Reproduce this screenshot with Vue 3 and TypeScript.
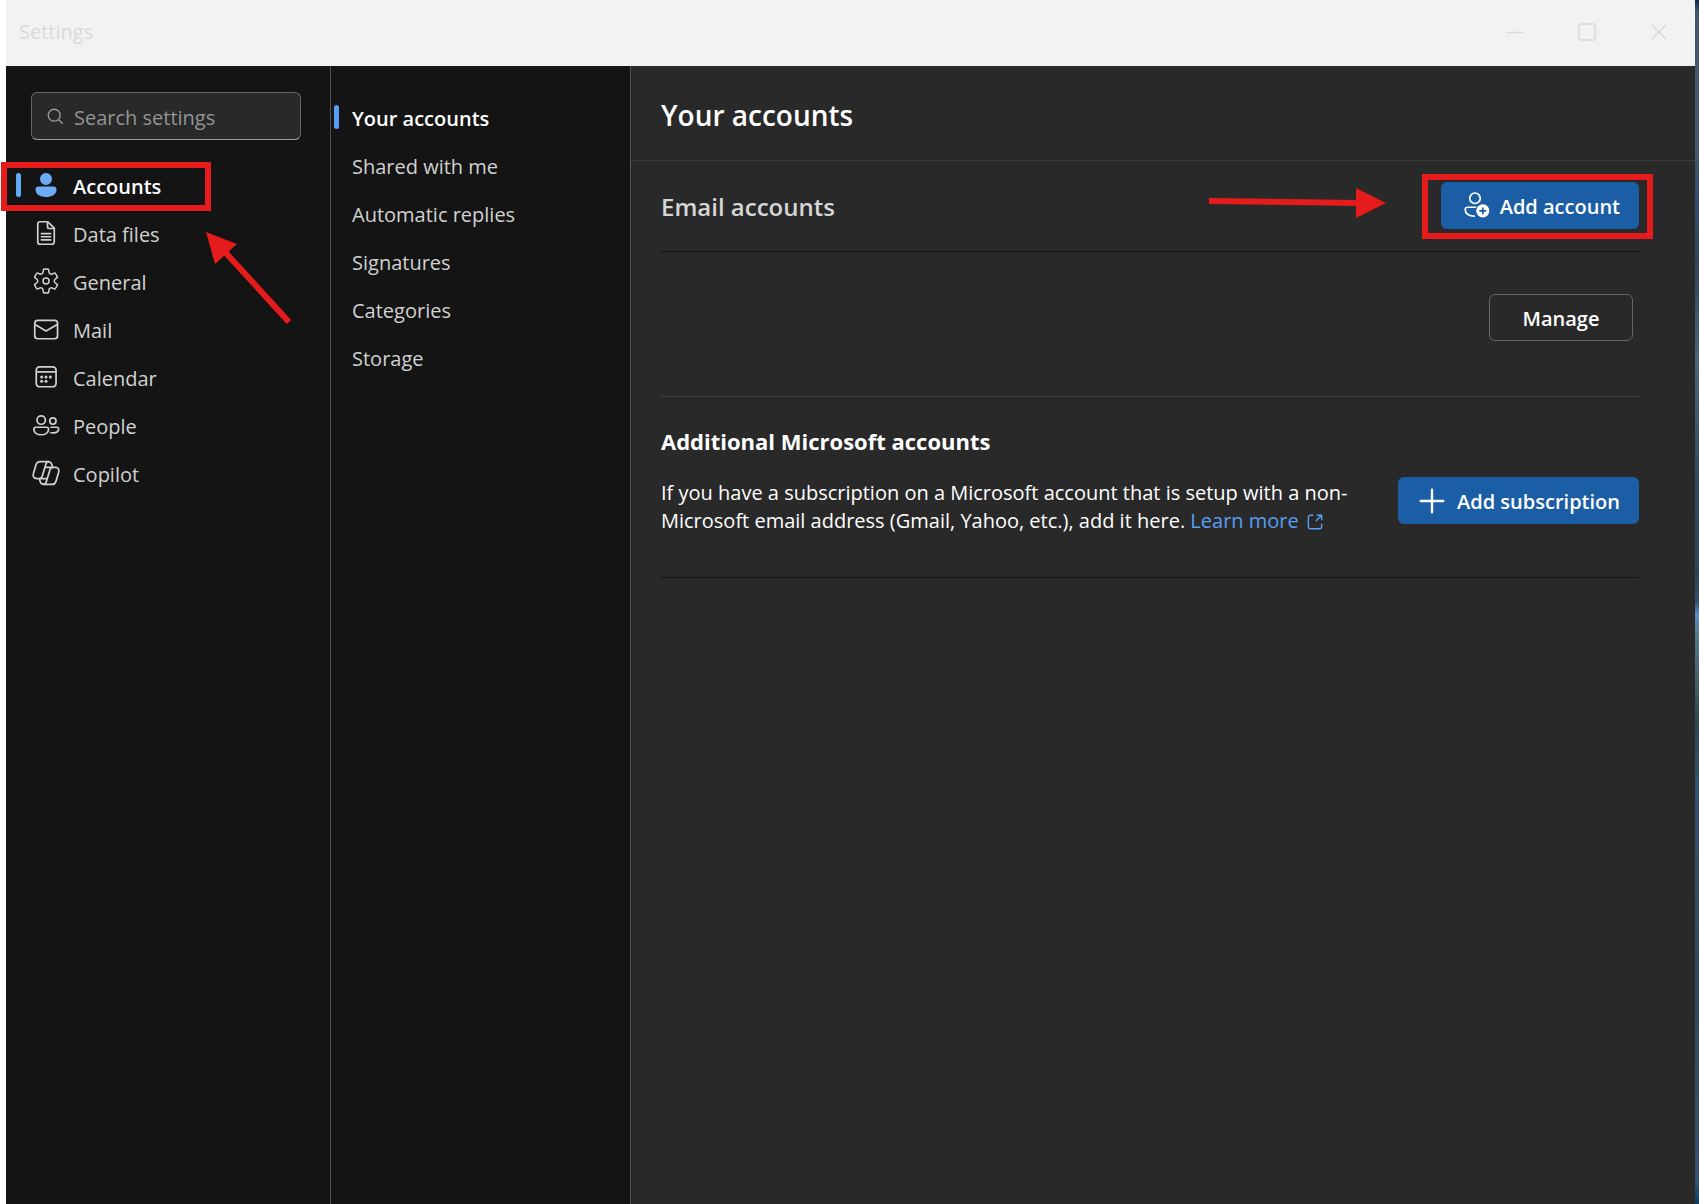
<script setup lang="ts">
import { ref } from 'vue'

interface NavItem {
  id: string
  label: string
}

const sections: NavItem[] = [
  { id: 'accounts', label: 'Accounts' },
  { id: 'files', label: 'Data files' },
  { id: 'general', label: 'General' },
  { id: 'mail', label: 'Mail' },
  { id: 'calendar', label: 'Calendar' },
  { id: 'people', label: 'People' },
  { id: 'copilot', label: 'Copilot' },
]

const pages: string[] = [
  'Your accounts',
  'Shared with me',
  'Automatic replies',
  'Signatures',
  'Categories',
  'Storage',
]

const activeSection = ref('accounts')
const activePage = ref('Your accounts')
const query = ref('')
</script>

<template>
  <div class="desktop">
    <div class="window">
      <header class="titlebar">
        <span class="caption">Settings</span>
        <div class="controls">
          <button type="button" aria-label="Minimize">
            <svg viewBox="0 0 20 20"><path d="M1.5 10.5h17" /></svg>
          </button>
          <button type="button" aria-label="Maximize">
            <svg viewBox="0 0 20 20"><rect x="2" y="2" width="16" height="16" rx="1.5" /></svg>
          </button>
          <button type="button" aria-label="Close">
            <svg viewBox="0 0 20 20"><path d="M3 3l14 14M17 3L3 17" /></svg>
          </button>
        </div>
      </header>

      <div class="body">
        <nav class="sections" aria-label="Settings sections">
          <label class="search">
            <svg viewBox="0 0 20 20" aria-hidden="true">
              <circle cx="8.5" cy="8.5" r="7" />
              <path d="M13.5 13.5l5 5" />
            </svg>
            <input v-model="query" type="text" placeholder="Search settings" aria-label="Search settings" />
          </label>

          <ul>
            <li v-for="item in sections" :key="item.id">
              <button
                type="button"
                class="section"
                :class="{ active: item.id === activeSection }"
                @click="activeSection = item.id"
              >
                <svg class="icon" viewBox="0 0 20 20" aria-hidden="true">
                  <path
                    v-if="item.id === 'accounts'"
                    class="solid"
                    d="M10 2a4 4 0 1 0 0 8 4 4 0 0 0 0-8zM5 11a2 2 0 0 0-2 2c0 1.7.83 2.97 2.13 3.8A9.14 9.14 0 0 0 10 18c1.85 0 3.58-.39 4.87-1.2A4.35 4.35 0 0 0 17 13a2 2 0 0 0-2-2H5z"
                  />
                  <template v-else-if="item.id === 'files'">
                    <path d="M6 2.5h5.2l4.3 4.3V16a1.5 1.5 0 0 1-1.5 1.5H6A1.5 1.5 0 0 1 4.5 16V4A1.5 1.5 0 0 1 6 2.5z" />
                    <path d="M11 2.8V6a1 1 0 0 0 1 1h3.2M6.5 10.4h7M6.5 12.5h7M6.5 14.6h7" />
                  </template>
                  <path
                    v-else-if="item.id === 'general'"
                    class="solid"
                    d="M1.91 7.38A8.5 8.5 0 0 1 3.7 4.3a.5.5 0 0 1 .54-.13l1.92.68a1 1 0 0 0 1.32-.76l.36-2a.5.5 0 0 1 .4-.4 8.53 8.53 0 0 1 3.55 0c.2.04.35.2.38.4l.37 2a1 1 0 0 0 1.32.76l1.92-.68a.5.5 0 0 1 .54.13 8.5 8.5 0 0 1 1.78 3.08c.06.2 0 .4-.15.54l-1.56 1.32a1 1 0 0 0 0 1.52l1.56 1.32a.5.5 0 0 1 .15.54 8.5 8.5 0 0 1-1.78 3.08.5.5 0 0 1-.54.13l-1.92-.68a1 1 0 0 0-1.32.76l-.37 2a.5.5 0 0 1-.38.4 8.53 8.53 0 0 1-3.56 0 .5.5 0 0 1-.39-.4l-.36-2a1 1 0 0 0-1.32-.76l-1.92.68a.5.5 0 0 1-.54-.13 8.5 8.5 0 0 1-1.78-3.08.5.5 0 0 1 .15-.54l1.56-1.32a1 1 0 0 0 0-1.52L2.06 7.92a.5.5 0 0 1-.15-.54zm1.06 0 1.3 1.1a2 2 0 0 1 0 3.04l-1.3 1.1c.3.79.72 1.51 1.25 2.16l1.6-.58a2 2 0 0 1 2.63 1.53l.3 1.67a7.56 7.56 0 0 0 2.5 0l.3-1.67a2 2 0 0 1 2.64-1.53l1.6.58a7.5 7.5 0 0 0 1.24-2.16l-1.3-1.1a2 2 0 0 1 0-3.04l1.3-1.1a7.5 7.5 0 0 0-1.25-2.16l-1.6.58a2 2 0 0 1-2.63-1.53l-.3-1.67a7.55 7.55 0 0 0-2.5 0l-.3 1.67A2 2 0 0 1 5.82 5.8l-1.6-.58a7.5 7.5 0 0 0-1.25 2.16zM7.5 10a2.5 2.5 0 1 1 5 0 2.5 2.5 0 0 1-5 0zM10 8.5a1.5 1.5 0 1 0 0 3 1.5 1.5 0 0 0 0-3z"
                  />
                  <template v-else-if="item.id === 'mail'">
                    <rect x="2.5" y="4.2" width="15.2" height="12.3" rx="2" />
                    <path d="M2.7 7l7.3 4.4L17.5 7" />
                  </template>
                  <template v-else-if="item.id === 'calendar'">
                    <rect x="3.5" y="3.3" width="13.2" height="13.2" rx="2.2" />
                    <path d="M3.5 6.6h13.2" />
                    <g class="dots">
                      <circle cx="7.1" cy="10" r="1" />
                      <circle cx="10" cy="10" r="1" />
                      <circle cx="12.9" cy="10" r="1" />
                      <circle cx="7.1" cy="12.9" r="1" />
                      <circle cx="10" cy="12.9" r="1" />
                    </g>
                  </template>
                  <template v-else-if="item.id === 'people'">
                    <circle cx="6.8" cy="6.7" r="2.8" />
                    <circle cx="14.6" cy="7.4" r="2.1" />
                    <path d="M3.2 11.5h7.2a1.3 1.3 0 0 1 1.3 1.3c0 2.4-2.2 3.7-4.9 3.7s-4.9-1.3-4.9-3.7a1.3 1.3 0 0 1 1.3-1.3z" />
                    <path d="M13 11.5h4.2a1.2 1.2 0 0 1 1.2 1.2c0 1.8-1.6 2.6-3.6 2.6-.8 0-1.4-.1-2-.3" />
                  </template>
                  <template v-else>
                    <path d="M6 2.4h5.500c1.500 0 2 .8 2.400 2l.5 1.900h1.800c2 0 2.800 1.600 2.200 3.300l-1.800 6c-.4 1.300-1.300 2-2.600 2H8.500c-1.500 0-2-.8-2.400-2l-.5-1.900H3.800c-2 0-2.800-1.600-2.200-3.300l1.800-6c.4-1.300 1.200-2 2.600-2z" />
                    <path d="M11.800 2.400c-1.200 0-1.600.8-1.900 1.800L7.500 12c-.4 1.200-.9 1.700-1.900 1.700M8.300 17.600c1.200 0 1.600-.8 1.900-1.800L12.600 8c.4-1.200.9-1.700 1.900-1.700M9.400 6.300h5M5.600 13.700h5" />
                  </template>
                </svg>
                <span>{{ item.label }}</span>
              </button>
              <template v-if="item.id === 'accounts'">
                <span class="mark mark-section"></span>
                <svg class="arrow arrow-section" viewBox="0 0 88 96" aria-hidden="true">
                  <path class="shaft" d="M20 21L84 91" />
                  <path class="head" d="M1 1l31 12L10 33z" />
                </svg>
              </template>
            </li>
          </ul>
        </nav>

        <nav class="pages" aria-label="Account pages">
          <ul>
            <li v-for="page in pages" :key="page">
              <button
                type="button"
                class="page"
                :class="{ active: page === activePage }"
                @click="activePage = page"
              >
                <span>{{ page }}</span>
              </button>
            </li>
          </ul>
        </nav>

        <main>
          <div class="heading">
            <h1>Your accounts</h1>
          </div>

          <div class="content">
            <section class="email">
              <h2>Email accounts</h2>
              <div class="callout">
                <button type="button" class="primary">
                  <svg class="icon" viewBox="0 0 20 20" aria-hidden="true">
                    <circle cx="10" cy="5.5" r="3.5" />
                    <path d="M10.8 11.5H5A1.5 1.5 0 0 0 3.5 13c0 2.8 2.7 4.4 6.5 4.5" />
                    <circle class="badge" cx="15.2" cy="13.9" r="4.4" />
                    <path class="cut" d="M15.2 11.6v4.6M12.9 13.9h4.6" />
                  </svg>
                  <span>Add account</span>
                </button>
                <span class="mark mark-add"></span>
                <svg class="arrow arrow-add" viewBox="0 0 178 32" aria-hidden="true">
                  <path class="shaft" d="M0 14l150 2" />
                  <path class="head" d="M147 1l30 15-30 15z" />
                </svg>
              </div>
            </section>

            <section class="account">
              <button type="button" class="outline"><span>Manage</span></button>
            </section>

            <section class="additional">
              <h2>Additional Microsoft accounts</h2>
              <div class="row">
                <p>
                  If you have a subscription on a Microsoft account that is setup with a non-Microsoft
                  email address (Gmail, Yahoo, etc.), add it here.
                  <a href="#learn-more">Learn more
                    <svg viewBox="0 0 18 18" aria-hidden="true">
                      <path d="M7 1.5H4A2.5 2.5 0 0 0 1.5 4v10A2.5 2.5 0 0 0 4 16.5h10a2.5 2.5 0 0 0 2.5-2.5v-3M11 1.5h5.5V7M16.2 1.8L10 8" />
                    </svg>
                  </a>
                </p>
                <button type="button" class="primary">
                  <svg class="icon plus" viewBox="0 0 20 20" aria-hidden="true">
                    <path d="M10 2.500v15M2.500 10h15" />
                  </svg>
                  <span>Add subscription</span>
                </button>
              </div>
            </section>
          </div>
        </main>
      </div>
    </div>
    <div class="wallpaper"></div>
  </div>
</template>

<style>
body {
  margin: 0;
  background: #ffffff;
}
</style>

<style scoped>
* {
  box-sizing: border-box;
}

.desktop {
  display: flex;
  min-height: 100vh;
  padding-left: 6px;
  font-family: 'Open Sans', 'Noto Sans', sans-serif;
  font-size: 20px;
  line-height: 28px;
  color: #ffffff;
}

.window {
  flex: 1;
  display: flex;
  flex-direction: column;
  min-width: 0;
}

.wallpaper {
  width: 4px;
  background: linear-gradient(
    #12284a 0,
    #44546a 1%,
    #46566c 12%,
    #35506a 16%,
    #33445c 22%,
    #4d6377 30%,
    #33495c 40%,
    #2f4353 48%,
    #34506a 50%,
    #5d8cc0 51%,
    #56777f 53%,
    #2e4750 60%,
    #34526b 65%,
    #34485c 82%,
    #35536b 98%,
    #0d3c66 100%
  );
}

button {
  margin: 0;
  padding: 0;
  border: 0;
  background: none;
  color: inherit;
  font: inherit;
  cursor: pointer;
}

ul {
  margin: 0;
  padding: 0;
  list-style: none;
}

svg {
  flex: none;
  fill: none;
  stroke: currentColor;
  overflow: visible;
}

.icon {
  width: 30px;
  height: 30px;
  stroke-width: 1.15;
}

.solid,
.dots {
  fill: currentColor;
  stroke: none;
}

.titlebar {
  display: flex;
  height: 66px;
  justify-content: space-between;
  align-items: center;
  padding: 0 0 2px 13px;
  background: #f2f2f2;
  color: #d9d9d9;
}

.controls {
  display: flex;
  height: 100%;
}

.controls button {
  display: flex;
  width: 72px;
  justify-content: center;
  align-items: center;
}

.controls svg {
  width: 20px;
  height: 20px;
  stroke-width: 1.5;
}

.body {
  flex: 1;
  display: flex;
}

.sections {
  flex: none;
  width: 325px;
  border-right: 1px solid #525252;
  background: #141414;
}

.search {
  display: flex;
  align-items: center;
  gap: 10px;
  height: 48px;
  margin: 26px 29px 21px 25px;
  padding: 0 15px;
  border: 1px solid #666666;
  border-bottom-color: #9e9e9e;
  border-radius: 6px;
  background: #292929;
  color: #999999;
}

.search svg {
  width: 17px;
  height: 17px;
  stroke-width: 1.6;
}

.search input {
  flex: 1;
  min-width: 0;
  padding: 3px 0 0;
  border: 0;
  outline: 0;
  background: none;
  color: #ffffff;
  font: inherit;
}

.search input::placeholder {
  color: #949494;
  opacity: 1;
}

.sections li {
  position: relative;
}

.section,
.page {
  position: relative;
  display: flex;
  align-items: center;
  width: 100%;
  height: 48px;
  color: #d1d1d1;
  text-align: left;
}

.section span,
.page span,
.outline span,
.primary span {
  padding-top: 3px;
}

.section {
  gap: 12px;
  padding-left: 25px;
}

.active {
  color: #ffffff;
  font-weight: 600;
}

.active::before {
  content: '';
  position: absolute;
  top: 12px;
  left: 10px;
  width: 5px;
  height: 24px;
  border-radius: 3px;
  background: #62abf5;
}

.section.active .icon {
  color: #6cabf5;
}

.pages {
  flex: none;
  width: 300px;
  padding-top: 27px;
  border-right: 1px solid #525252;
  background: #141414;
}

.page {
  padding-left: 21px;
}

.page.active::before {
  left: 3px;
  background: #579ff5;
}

main {
  flex: 1;
  min-width: 0;
  background: #292929;
}

h1,
h2,
p {
  margin: 0;
}

h1,
h2 {
  font-weight: 600;
}

h1 {
  font-size: 28px;
  line-height: 40px;
}

h2 {
  font-size: 24px;
  line-height: 32px;
}

.heading {
  display: flex;
  align-items: center;
  height: 95px;
  padding: 3px 0 0 30px;
  border-bottom: 1px solid #3d3d3d;
}

.content {
  padding: 0 56px 0 30px;
}

.email {
  display: flex;
  justify-content: space-between;
  align-items: center;
  height: 91px;
  padding-bottom: 2px;
  border-bottom: 1px solid #141414;
  color: #d6d6d6;
}

.email h2 {
  padding-top: 4px;
}

.callout {
  position: relative;
}

.primary,
.outline {
  display: flex;
  flex: none;
  justify-content: center;
  align-items: center;
  height: 47px;
  border-radius: 6px;
  color: #ffffff;
  font-weight: 600;
}

.primary {
  gap: 10px;
  padding: 0 19px;
  background: #1b5ea5;
}

.badge {
  fill: #ffffff;
  stroke: none;
}

.cut {
  stroke: #1b5ea5;
}

.plus {
  stroke-width: 1.6;
  stroke-linecap: round;
}

.account {
  display: flex;
  justify-content: flex-end;
  padding: 42px 6px 55px 0;
  border-bottom: 1px solid #3d3d3d;
}

.outline {
  width: 144px;
  border: 1px solid #666666;
}

.additional {
  padding: 28px 0 42px;
  border-bottom: 1px solid #141414;
}

.additional .row {
  display: flex;
  justify-content: space-between;
  align-items: flex-start;
  gap: 48px;
  padding-top: 20px;
}

.additional h2 {
  font-size: 22px;
  font-weight: 700;
}

.additional p {
  padding-top: 2px;
}

a {
  color: #579ff5;
  text-decoration: none;
}

a svg {
  width: 16px;
  height: 16px;
  margin-left: 3px;
  vertical-align: -2px;
  stroke-width: 1.6;
}

.mark {
  position: absolute;
  border: 6px solid #e61b1b;
  pointer-events: none;
}

.mark-section {
  top: 1px;
  left: -5px;
  width: 210px;
  height: 49px;
}

.mark-add {
  top: -8px;
  right: -14px;
  bottom: -10px;
  left: -19px;
}

.arrow {
  position: absolute;
  stroke: none;
  pointer-events: none;
}

.shaft {
  stroke: #e61b1b;
  stroke-width: 6;
}

.head {
  fill: #e61b1b;
}

.arrow-section {
  top: 70px;
  left: 199px;
  width: 88px;
  height: 96px;
}

.arrow-add {
  top: 5px;
  right: 252px;
  width: 178px;
  height: 32px;
}
</style>
